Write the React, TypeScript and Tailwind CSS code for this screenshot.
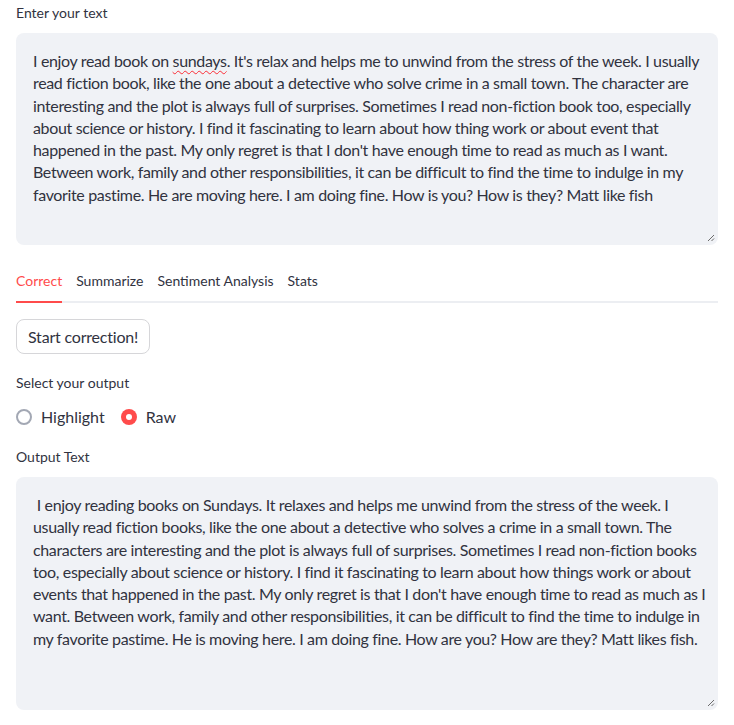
import React, { useState } from "react";

const inputLines: React.ReactNode[] = [
  <>
    I enjoy read book on{" "}
    <span className="underline decoration-wavy decoration-red-500 decoration-1 underline-offset-[3px]">sundays</span>
    . It's relax and helps me to unwind from the stress of the week. I usually
  </>,
  "read fiction book, like the one about a detective who solve crime in a small town. The character are",
  "interesting and the plot is always full of surprises. Sometimes I read non-fiction book too, especially",
  "about science or history. I find it fascinating to learn about how thing work or about event that",
  "happened in the past. My only regret is that I don't have enough time to read as much as I want.",
  "Between work, family and other responsibilities, it can be difficult to find the time to indulge in my",
  "favorite pastime. He are moving here. I am doing fine. How is you? How is they? Matt like fish",
];

const outputLines = [
  "\u00a0I enjoy reading books on Sundays. It relaxes and helps me unwind from the stress of the week. I",
  "usually read fiction books, like the one about a detective who solves a crime in a small town. The",
  "characters are interesting and the plot is always full of surprises. Sometimes I read non-fiction books",
  "too, especially about science or history. I find it fascinating to learn about how things work or about",
  "events that happened in the past. My only regret is that I don't have enough time to read as much as I",
  "want. Between work, family and other responsibilities, it can be difficult to find the time to indulge in",
  "my favorite pastime. He is moving here. I am doing fine. How are you? How are they? Matt likes fish.",
];

const ResizeGrip = () => (
  <svg className="absolute right-[3px] bottom-[3px]" width="8" height="8" viewBox="0 0 8 8">
    <path d="M7 1 L1 7 M7 4.5 L4.5 7" stroke="#6b6b6b" strokeWidth="1" fill="none" />
  </svg>
);

const TextBox = ({ lines, height }: { lines: React.ReactNode[]; height: string }) => (
  <div className={`relative bg-[#f0f2f6] rounded-lg pl-[17px] pr-2 pt-[17px] ${height}`}>
    {lines.map((line, i) => (
      <div key={i} className="whitespace-nowrap text-[16px] leading-[22.3px] tracking-[-0.35px]">
        {line}
      </div>
    ))}
    <ResizeGrip />
  </div>
);

const tabs = ["Correct", "Summarize", "Sentiment Analysis", "Stats"];

export default function App() {
  const [activeTab, setActiveTab] = useState("Correct");
  const [output, setOutput] = useState("Raw");

  return (
    <div className="w-[734px] h-[725px] bg-white px-4 text-[#31333f] overflow-hidden font-['Lato','Noto_Sans',sans-serif]">
      <div className="pt-[4px] text-[14px] leading-[18px] h-[33px]">Enter your text</div>
      <TextBox lines={inputLines} height="h-[212px]" />

      {/* Tabs */}
      <div className="mt-[26px] flex gap-[14px] border-b-2 border-[#eceef2] text-[14px]">
        {tabs.map(tab => (
          <button
            key={tab}
            onClick={() => setActiveTab(tab)}
            className={`pb-[10px] -mb-[2px] border-b-2 leading-[20px] ${
              activeTab === tab ? "border-[#ff4b4b] text-[#ff4b4b]" : "border-transparent text-[#31333f]"
            }`}
          >
            {tab}
          </button>
        ))}
      </div>

      <button className="mt-[16px] h-[35px] px-[11px] border border-[#d6d6d9] rounded-lg bg-white text-[16px] leading-[20px] tracking-[-0.2px]">
        Start correction!
      </button>

      <div className="mt-[20px] text-[14px] leading-[18px]">Select your output</div>

      <div className="mt-[14px] flex items-center gap-4 text-[16px] leading-[22px]">
        {["Highlight", "Raw"].map(opt => (
          <button key={opt} onClick={() => setOutput(opt)} className="flex items-center gap-[9px]">
            {output === opt ? (
              <span className="w-4 h-4 rounded-full bg-[#ff4b4b] flex items-center justify-center">
                <span className="w-[6px] h-[6px] rounded-full bg-white" />
              </span>
            ) : (
              <span className="w-4 h-4 rounded-full border-2 border-[#a3a8b4] bg-white" />
            )}
            <span>{opt}</span>
          </button>
        ))}
      </div>

      <div className="mt-[20px] text-[14px] leading-[18px] h-[29px]">Output Text</div>
      <TextBox lines={outputLines} height="h-[233px]" />
    </div>
  );
}
